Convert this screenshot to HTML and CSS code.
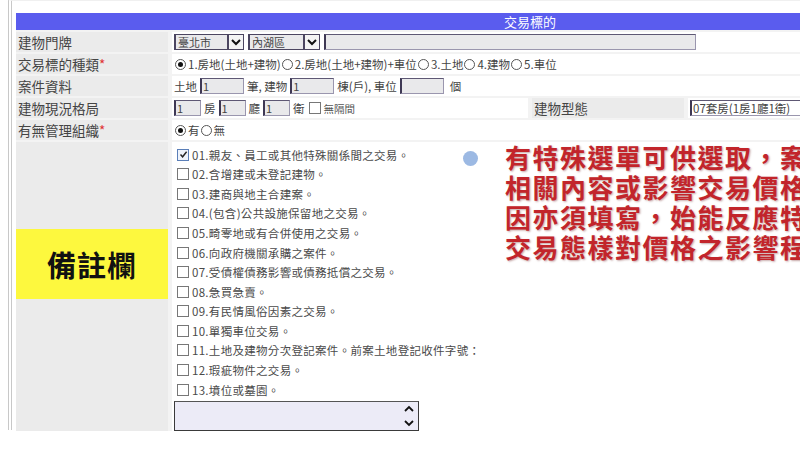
FILE: index.html
```html
<!DOCTYPE html>
<html lang="zh-Hant">
<head>
  <meta charset="UTF-8">
  <title>交易標的</title>
  <link rel="stylesheet" href="styles.css">
</head>
<body>
  <div class="frame">
    <div class="form">
      <div class="head">交易標的</div>

      <div class="label">建物門牌</div>
      <div class="value span3">
        <div class="select w70"><span>臺北市</span><b><svg width="10" height="8" viewBox="0 0 10 8"><path d="M1 2 L5 6 L9 2" fill="none" stroke="#111" stroke-width="2"/></svg></b></div>
        <div class="select w72"><span>內湖區</span><b><svg width="10" height="8" viewBox="0 0 10 8"><path d="M1 2 L5 6 L9 2" fill="none" stroke="#111" stroke-width="2"/></svg></b></div>
        <div class="box addr"></div>
      </div>

      <div class="label">交易標的種類<em>*</em></div>
      <div class="value span3">
        <span class="radio on"></span>1.房地(土地+建物)
        <span class="radio"></span>2.房地(土地+建物)+車位
        <span class="radio"></span>3.土地
        <span class="radio"></span>4.建物
        <span class="radio"></span>5.車位
      </div>

      <div class="label">案件資料</div>
      <div class="value span3">
        土地 <div class="box w44">1</div> 筆, 建物 <div class="box w44">1</div> 棟(戶), 車位 <div class="box w44"></div> <span class="unit">個</span>
      </div>

      <div class="label">建物現況格局</div>
      <div class="value">
        <div class="box w27">1</div><span class="unit-s">房</span><div class="box w27">1</div><span class="unit-s">廳</span><div class="box w27">1</div><span class="unit-s">衛</span><span class="check"></span><small>無隔間</small>
      </div>
      <div class="label">建物型態</div>
      <div class="value"><div class="box type">07套房(1房1廳1衛)</div></div>

      <div class="label">有無管理組織<em>*</em></div>
      <div class="value span3">
        <span class="radio on"></span>有<span class="radio"></span>無
      </div>

      <div class="label note-label">
        <div class="note-tag">備註欄</div>
      </div>
      <div class="value span3 notes">
        <div class="item"><span class="check on"><svg width="9" height="9" viewBox="0 0 9 9"><path d="M1.5 4.5 L3.6 6.8 L7.6 1.8" fill="none" stroke="#222" stroke-width="1.4"/></svg></span>01.親友、員工或其他特殊關係間之交易。</div>
        <div class="item"><span class="check"></span>02.含增建或未登記建物。</div>
        <div class="item"><span class="check"></span>03.建商與地主合建案。</div>
        <div class="item"><span class="check"></span>04.(包含)公共設施保留地之交易。</div>
        <div class="item"><span class="check"></span>05.畸零地或有合併使用之交易。</div>
        <div class="item"><span class="check"></span>06.向政府機關承購之案件。</div>
        <div class="item"><span class="check"></span>07.受債權債務影響或債務抵償之交易。</div>
        <div class="item"><span class="check"></span>08.急買急賣。</div>
        <div class="item"><span class="check"></span>09.有民情風俗因素之交易。</div>
        <div class="item"><span class="check"></span>10.單獨車位交易。</div>
        <div class="item"><span class="check"></span>11.土地及建物分次登記案件。前案土地登記收件字號：</div>
        <div class="item"><span class="check"></span>12.瑕疵物件之交易。</div>
        <div class="item"><span class="check"></span>13.墳位或墓園。</div>
        <div class="memo">
          <svg width="12" height="26" viewBox="0 0 12 26"><path d="M2 8 L6 4 L10 8 M2 18 L6 22 L10 18" fill="none" stroke="#111" stroke-width="1.8"/></svg>
        </div>
      </div>
    </div>

    <!-- callout over the form -->
    <div class="callout">
      <span class="dot"></span>
      <p>有特殊選單可供選取，案件如有<br>相關內容或影響交易價格之特殊<br>因亦須填寫，始能反應特殊<br>交易態樣對價格之影響程度</p>
    </div>
  </div>
</body>
</html>
```
FILE: styles.css
```css
html, body {
  margin: 0;
  width: 800px;
  height: 450px;
  overflow: hidden;
  background: #fff;
  font-family: "Noto Sans CJK TC", "Noto Sans", sans-serif;
  color: #333;
}
.frame {
  position: relative;
  margin-left: 8px;
  height: 430px;
  padding: 12px 0 0 4px;
  box-sizing: border-box;
  border-left: 4px double #c8c8c8;
  border-top: 1px solid #f0f0f0;
}
.form {
  display: grid;
  grid-template-columns: 152px 356px 152px 356px;
  grid-template-rows: 17px repeat(5, 20px) 289px;
  column-gap: 4px;
  row-gap: 2px;
  width: 1028px;
  background: #f3f3f3;
}
.head {
  grid-column: 1 / 5;
  background: #5a5cee;
  color: #fff;
  font-size: 13px;
  line-height: 17px;
  text-align: center;
}
.label {
  background: #ebebeb;
  font-size: 13.5px;
  padding-left: 2px;
  display: flex;
  align-items: center;
  color: #444;
}
.label em {
  color: #e03030;
  font-style: normal;
}
.value {
  background: #fff;
  display: flex;
  align-items: center;
  font-size: 11.5px;
  color: #444;
  white-space: nowrap;
  padding-left: 2px;
}
.span3 {
  grid-column: 2 / 5;
}
.select {
  display: flex;
  height: 16px;
  border: 1px solid #4b4560;
  border-left-width: 2px;
  background: #e9e9eb;
  margin-right: 4px;
  box-sizing: border-box;
}
.select span {
  flex: 1;
  padding-left: 2px;
  line-height: 14px;
  font-size: 11px;
}
.select b {
  width: 14px;
  border-left: 2px solid #4b4560;
  background: #f4f4f4;
  display: flex;
  align-items: center;
  justify-content: center;
}
.w70 { width: 70px; }
.w72 { width: 72px; }
.box {
  height: 16px;
  box-sizing: border-box;
  border: 1px solid #9a96ae;
  border-left: 2px solid #3e3854;
  border-top-color: #5e5874;
  background: #e9e9eb;
  font-size: 11px;
  line-height: 14px;
  padding-left: 1px;
  margin: 0 3px;
}
.addr { width: 372px; margin: 0; }
.w44 { width: 44px; }
.w27 { width: 27px; margin: 0; }
.unit-s { margin: 0 3px; }
.type {
  width: 400px;
  background: #fff;
  margin: 0;
  font-size: 11.5px;
}
.unit { margin-left: 3px; }
.radio {
  display: inline-block;
  width: 9px;
  height: 9px;
  border: 1px solid #555;
  border-radius: 50%;
  margin: 0 2px 0 1px;
  position: relative;
  background: #fff;
}
.radio.on::after {
  content: "";
  position: absolute;
  left: 2px;
  top: 2px;
  width: 5px;
  height: 5px;
  border-radius: 50%;
  background: #111;
}
.check {
  display: inline-flex;
  align-items: center;
  justify-content: center;
  width: 10px;
  height: 10px;
  border: 1px solid #777;
  background: #fff;
  margin: 0 3px 0 1px;
}
.check.on {
  border-color: #5b7fb8;
  background: #eef3fb;
}
small { font-size: 10.5px; color: #555; }
.note-label {
  align-items: flex-start;
  padding: 87px 0 0;
}
.note-tag {
  width: 152px;
  height: 70px;
  background: #fdf83e;
  color: #111;
  font-size: 29px;
  font-weight: bold;
  display: flex;
  align-items: center;
  justify-content: center;
  letter-spacing: 1px;
}
.notes {
  flex-direction: column;
  align-items: flex-start;
  padding-top: 3px;
  box-sizing: border-box;
}
.item {
  height: 19.75px;
  display: flex;
  align-items: center;
  font-size: 11.5px;
  color: #4a4a4a;
  letter-spacing: 0.3px;
}
.item .check { margin-left: 3px; }
.memo {
  margin-top: 2px;
  width: 245px;
  height: 30px;
  box-sizing: border-box;
  border: 1px solid #3a3a3a;
  border-top-color: #555;
  background: #ecebf7;
  display: flex;
  justify-content: flex-end;
  align-items: center;
  padding-right: 3px;
}
.callout {
  position: absolute;
  left: 451px;
  top: 129px;
  display: flex;
  align-items: flex-start;
}
.dot {
  width: 15px;
  height: 15px;
  border-radius: 50%;
  background: #9cb9e3;
  margin: 21px 27px 0 0;
  flex: none;
}
.callout p {
  margin: 0;
  padding-top: 12px;
  font-size: 26px;
  line-height: 30px;
  font-weight: bold;
  letter-spacing: 1.5px;
  color: #c2252b;
  white-space: nowrap;
  text-shadow: 1px 1px 2px rgba(90, 0, 0, 0.35);
}
```
